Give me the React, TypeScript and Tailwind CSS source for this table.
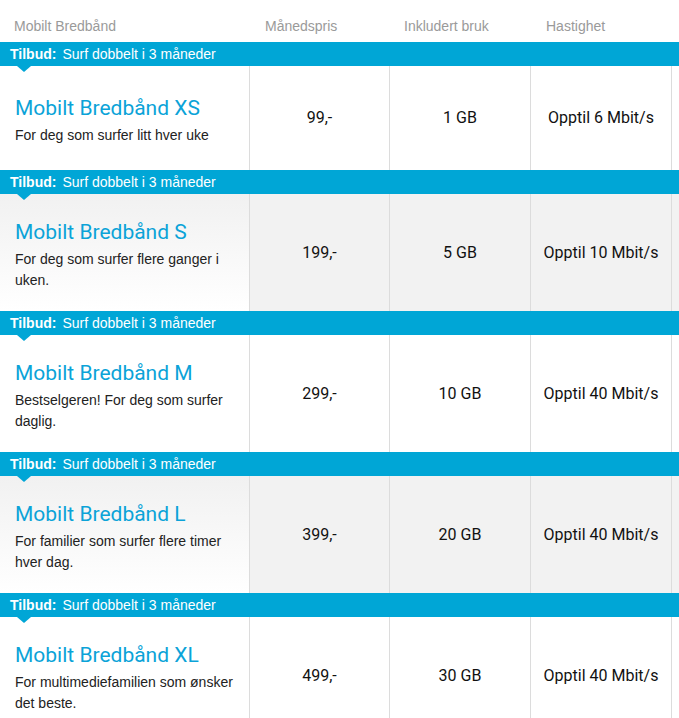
const plans = [
  { name: "Mobilt Bredbånd XS", desc: "For deg som surfer litt hver uke", price: "99,-", data: "1 GB", speed: "Opptil 6 Mbit/s", grey: false, h: "h-[104px]" },
  { name: "Mobilt Bredbånd S", desc: "For deg som surfer flere ganger i uken.", price: "199,-", data: "5 GB", speed: "Opptil 10 Mbit/s", grey: true, h: "h-[117px]" },
  { name: "Mobilt Bredbånd M", desc: "Bestselgeren! For deg som surfer daglig.", price: "299,-", data: "10 GB", speed: "Opptil 40 Mbit/s", grey: false, h: "h-[117px]" },
  { name: "Mobilt Bredbånd L", desc: "For familier som surfer flere timer hver dag.", price: "399,-", data: "20 GB", speed: "Opptil 40 Mbit/s", grey: true, h: "h-[117px]" },
  { name: "Mobilt Bredbånd XL", desc: "For multimediefamilien som ønsker det beste.", price: "499,-", data: "30 GB", speed: "Opptil 40 Mbit/s", grey: false, h: "h-[117px]" },
];

const cols = "grid grid-cols-[250px_140px_141px_141px_1fr]";
const valueFont = { fontFamily: "Roboto, 'Noto Sans', sans-serif" };

const OfferBar = () => (
  <div className="relative h-6 bg-[#00a6d6] flex items-center pl-[10px] text-[14px] text-white">
    <span className="font-bold">Tilbud:</span>
    <span className="ml-[6px]">Surf dobbelt i 3 måneder</span>
    <div className="absolute left-[17px] top-6 w-0 h-0 border-l-[7px] border-r-[7px] border-t-[6px] border-l-transparent border-r-transparent border-t-[#00a6d6]" />
  </div>
);

const App = () => {
  return (
    <div className="w-[679px] h-[718px] overflow-hidden bg-white" style={{ fontFamily: "'Liberation Sans', Arial, sans-serif" }}>
      <div className={`${cols} h-[42px] items-end pb-[5px] text-[14px] text-[#9a9a9a]`}>
        <div className="pl-[14px]">Mobilt Bredbånd</div>
        <div className="pl-[15px]">Månedspris</div>
        <div className="pl-[14px]">Inkludert bruk</div>
        <div className="pl-[15px]">Hastighet</div>
        <div />
      </div>

      {plans.map((p) => {
        const cell = `border-r border-[#dcdcdc] flex items-center justify-center text-[16px] text-[#111] ${p.grey ? "bg-[#f2f2f2]" : "bg-white"}`;
        return (
          <div key={p.name}>
            <OfferBar />
            <div className={`${cols} ${p.h}`}>
              <div className={`border-r border-[#dcdcdc] flex flex-col justify-center pl-[15px] pr-[10px] pt-[4px] ${p.grey ? "bg-gradient-to-b from-[#f1f1f1] to-white" : "bg-white"}`}>
                <div className="text-[21px] leading-[26px] text-[#0ba3d8]" style={valueFont}>
                  {p.name}
                </div>
                <div className="mt-[4px] text-[14px] leading-[21px] text-[#222]">{p.desc}</div>
              </div>
              <div className={cell} style={valueFont}>{p.price}</div>
              <div className={cell} style={valueFont}>{p.data}</div>
              <div className={cell} style={valueFont}>{p.speed}</div>
              <div className={p.grey ? "bg-[#f2f2f2]" : "bg-white"} />
            </div>
          </div>
        );
      })}
    </div>
  );
};

export default App;
